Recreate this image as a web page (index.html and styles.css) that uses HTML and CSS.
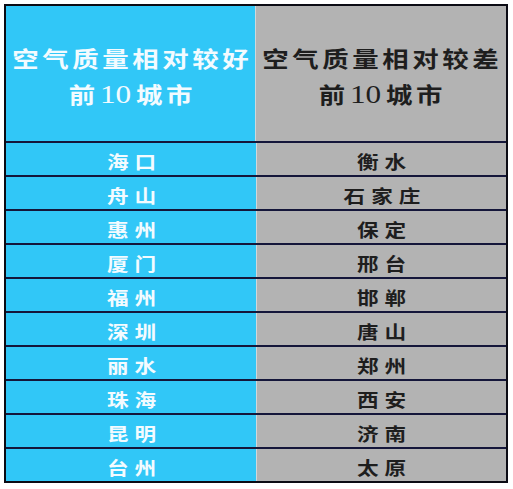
FILE: index.html
```html
<!DOCTYPE html>
<html lang="zh">
<head>
<meta charset="utf-8">
<link rel="stylesheet" href="styles.css">
</head>
<body>
<div class="page">
  <div class="sheet">
    <div class="row head">
      <div class="cell good"><span class="l1">空气质量相对较好</span><span class="l2">前<span class="num">10</span>城市</span></div>
      <div class="cell bad"><span class="l1">空气质量相对较差</span><span class="l2">前<span class="num">10</span>城市</span></div>
    </div>
    <div class="row"><div class="cell good"><span class="t">海口</span></div><div class="cell bad"><span class="t">衡水</span></div></div>
    <div class="row"><div class="cell good"><span class="t">舟山</span></div><div class="cell bad"><span class="t">石家庄</span></div></div>
    <div class="row"><div class="cell good"><span class="t">惠州</span></div><div class="cell bad"><span class="t">保定</span></div></div>
    <div class="row"><div class="cell good"><span class="t">厦门</span></div><div class="cell bad"><span class="t">邢台</span></div></div>
    <div class="row"><div class="cell good"><span class="t">福州</span></div><div class="cell bad"><span class="t">邯郸</span></div></div>
    <div class="row"><div class="cell good"><span class="t">深圳</span></div><div class="cell bad"><span class="t">唐山</span></div></div>
    <div class="row"><div class="cell good"><span class="t">丽水</span></div><div class="cell bad"><span class="t">郑州</span></div></div>
    <div class="row"><div class="cell good"><span class="t">珠海</span></div><div class="cell bad"><span class="t">西安</span></div></div>
    <div class="row"><div class="cell good"><span class="t">昆明</span></div><div class="cell bad"><span class="t">济南</span></div></div>
    <div class="row last"><div class="cell good"><span class="t">台州</span></div><div class="cell bad"><span class="t">太原</span></div></div>
  </div>
</div>
</body>
</html>
```
FILE: styles.css
```css
html, body {
  margin: 0;
  padding: 0;
  background: #ffffff;
}
.page {
  padding: 4px 0 0 4px;
}
.sheet {
  width: 500px;
  border: 2px solid #0b0b14;
  display: flex;
  flex-direction: column;
  font-family: "Noto Sans CJK SC", "Liberation Sans", sans-serif;
  font-weight: 700;
}
.row {
  display: flex;
  height: 32px;
  border-bottom: 2px solid #14163a;
}
.row.last {
  border-bottom: none;
}
.row.head {
  height: 135px;
}
.cell {
  display: flex;
  flex-direction: column;
  align-items: center;
  justify-content: center;
}
.good {
  width: 250px;
  background: #31c7f7;
  color: #f3fbff;
  border-right: 1px solid #cfd8dc;
}
.bad {
  flex: 1;
  background: #b3b3b3;
  color: #1e1e1e;
}
.head .cell {
  padding-top: 5px;
  box-sizing: border-box;
  font-size: 22px;
  line-height: 36px;
}
.l1, .l2 {
  display: block;
  letter-spacing: 3px;
  padding-left: 3px;
  white-space: nowrap;
  transform: scaleX(1.2);
}
.num {
  font-family: "Liberation Serif", serif;
  font-weight: 400;
  font-size: 26px;
  letter-spacing: 0;
  margin-right: 4px;
  margin-left: 1px;
}
.t {
  display: inline-block;
  font-size: 18px;
  line-height: 20px;
  letter-spacing: 5px;
  padding-left: 5px;
  padding-top: 3px;
  white-space: nowrap;
  transform: scaleX(1.2);
}
```
